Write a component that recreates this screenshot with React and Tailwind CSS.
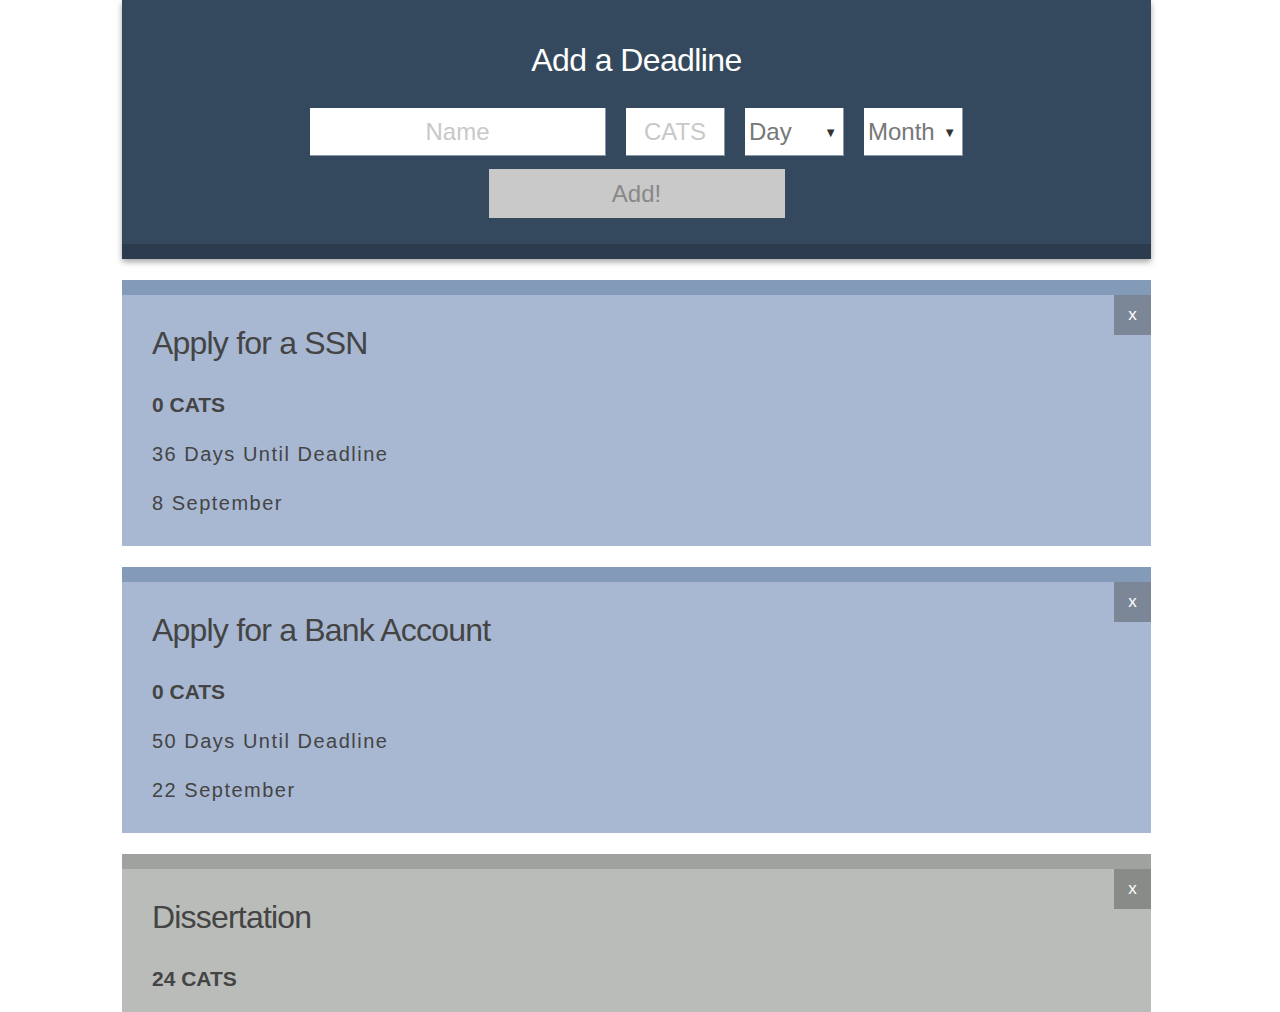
import React from 'react';

const DEADLINES = [
  { name: 'Apply for a SSN', cats: 0, days: 36, date: '8 September', band: 'bg-[#839ab9]', body: 'bg-[#a8b8d2]', close: 'bg-[#7b8696]' },
  { name: 'Apply for a Bank Account', cats: 0, days: 50, date: '22 September', band: 'bg-[#839ab9]', body: 'bg-[#a8b8d2]', close: 'bg-[#7b8696]' },
  { name: 'Dissertation', cats: 24, days: 112, date: '23 November', band: 'bg-[#a0a29f]', body: 'bg-[#babcb9]', close: 'bg-[#898b88]' },
];

const font = { fontFamily: '"Helvetica Neue", "Liberation Sans", Arial, sans-serif' };

const Select = ({ label }) => (
  <div className="relative w-[99px] h-[48px] bg-white border-b border-r border-[#8a97a6] flex items-center">
    <span className="pl-[4px] text-[24px] font-light text-[#777]">{label}</span>
    <span className="absolute right-[6px] top-[15px] text-[13px] text-[#333]">▼</span>
  </div>
);

const DeadlineCard = ({ item }) => (
  <div className="mt-[21px]">
    <div className={`h-[15px] ${item.band}`} />
    <div className={`relative ${item.body} h-[251px] px-[30px] pt-[30px] text-[#444]`}>
      <button className={`absolute right-0 top-0 w-[37px] h-[40px] ${item.close} text-white text-[17px] flex items-center justify-center`}>
        x
      </button>
      <h2 className="text-[32px] font-light leading-[36px] tracking-[-0.8px]">{item.name}</h2>
      <p className="mt-[32px] text-[21px] font-bold leading-[24px]">{item.cats} CATS</p>
      <p className="mt-[25px] text-[20px] leading-[24px] tracking-[1.5px]">{item.days} Days Until Deadline</p>
      <p className="mt-[25px] text-[20px] leading-[24px] tracking-[1.5px]">{item.date}</p>
    </div>
  </div>
);

export default function App() {
  return (
    <div className="min-h-screen bg-white" style={font}>
      <div className="ml-[122px] w-[1029px]">
        <div className="bg-[#34495e] shadow-[0_3px_6px_rgba(0,0,0,0.35)]">
          <div className="h-[244px] flex flex-col items-center pt-[40px]">
            <h1 className="text-[32px] font-light text-white leading-[40px] tracking-[-0.6px]">Add a Deadline</h1>
            <div className="mt-[28px] flex gap-[20px]">
              <input
                placeholder="Name"
                className="w-[296px] h-[48px] bg-white border-b border-r border-[#8a97a6] text-center text-[24px] font-light placeholder:text-[#c8c8c8] outline-none"
              />
              <input
                placeholder="CATS"
                className="w-[99px] h-[48px] bg-white border-b border-r border-[#8a97a6] text-center text-[24px] font-light placeholder:text-[#c8c8c8] outline-none"
              />
              <Select label="Day" />
              <Select label="Month" />
            </div>
            <button className="mt-[13px] w-[296px] h-[49px] bg-[#c9c9c9] text-[24px] font-light text-[#888]">
              Add!
            </button>
          </div>
          <div className="h-[15px] bg-[#2c3b4e]" />
        </div>
        {DEADLINES.map((d) => (
          <DeadlineCard key={d.name} item={d} />
        ))}
      </div>
    </div>
  );
}
